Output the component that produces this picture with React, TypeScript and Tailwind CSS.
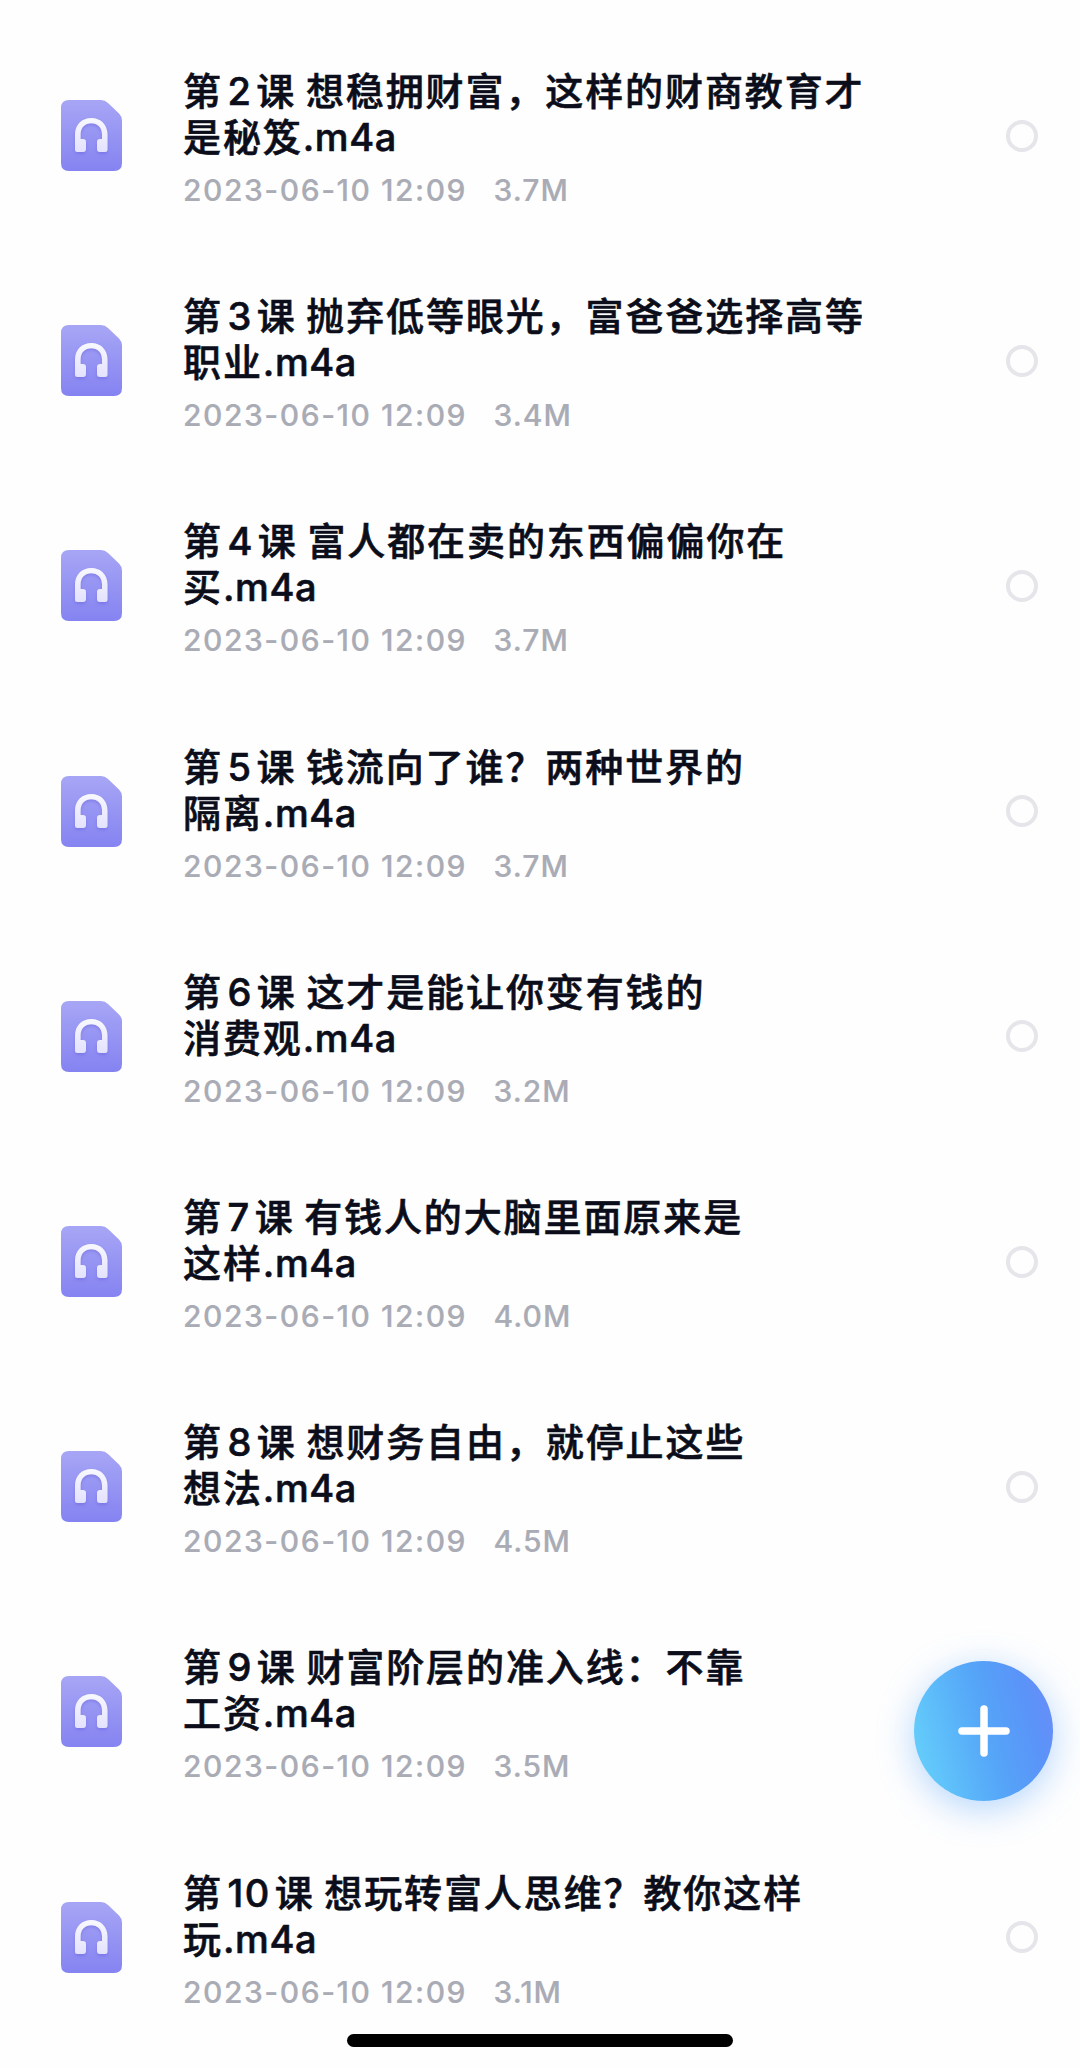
import React, { useState } from 'react';

const FILES = [
  { no: '2', title: '想稳拥财富,这样的财商教育才', rest: '是秘笈', size: '3.7M' },
  { no: '3', title: '抛弃低等眼光,富爸爸选择高等', rest: '职业', size: '3.4M' },
  { no: '4', title: '富人都在卖的东西偏偏你在', rest: '买', size: '3.7M' },
  { no: '5', title: '钱流向了谁?两种世界的', rest: '隔离', size: '3.7M' },
  { no: '6', title: '这才是能让你变有钱的', rest: '消费观', size: '3.2M' },
  { no: '7', title: '有钱人的大脑里面原来是', rest: '这样', size: '4.0M' },
  { no: '8', title: '想财务自由,就停止这些', rest: '想法', size: '4.5M' },
  { no: '9', title: '财富阶层的准入线:不靠', rest: '工资', size: '3.5M' },
  { no: '10', title: '想玩转富人思维?教你这样', rest: '玩', size: '3.1M' },
].map(f => ({
  ...f,
  // full-width punctuation
  title: f.title.replace(',', '\uff0c').replace('?', '\uff1f').replace(':', '\uff1a'),
}));

function AudioFileIcon() {
  return (
    <svg width="61" height="71" viewBox="0 0 61 71" className="shrink-0">
      <defs>
        <linearGradient id="file" x1="0" y1="0" x2="0" y2="1">
          <stop offset="0" stopColor="#a7a6f5" />
          <stop offset="1" stopColor="#8583f1" />
        </linearGradient>
        <linearGradient id="phones" x1="0" y1="0" x2="0" y2="1">
          <stop offset="0" stopColor="#f8f8ff" />
          <stop offset="1" stopColor="#e3e2fd" />
        </linearGradient>
        <filter id="soft" x="-30%" y="-30%" width="160%" height="160%">
          <feDropShadow dx="0" dy="2" stdDeviation="1.5" floodColor="#5f59d8" floodOpacity="0.4" />
        </filter>
      </defs>
      <path
        d="M8 0H40Q44 0 47 3L58 13.500Q61 16.500 61 20.500V63Q61 71 53 71H8Q0 71 0 63V8Q0 0 8 0Z"
        fill="url(#file)"
      />
      <path
        d="M14 34.500C14 24.500 21 18 30.300 18S46.500 24.500 46.500 34.500V49.500Q46.500 52 44 52H39Q36 52 36 49V42Q36 39 39 39H41V34.500C41 27.500 36.500 23.300 30.300 23.300S19.600 27.500 19.600 34.500V39H22Q25 39 25 42V49Q25 52 22 52H16.500Q14 52 14 49.500Z"
        fill="url(#phones)"
        filter="url(#soft)"
      />
    </svg>
  );
}

export default function App() {
  const [selected, setSelected] = useState<string[]>([]);

  const toggle = (no: string) =>
    setSelected(s => (s.includes(no) ? s.filter(n => n !== no) : [...s, no]));

  return (
    <div className="relative h-[2068px] w-[1080px] overflow-hidden bg-[#fefefe] pt-[23px] font-[Inter,'Noto_Sans_CJK_SC',sans-serif]">
      {FILES.map(f => (
        <div key={f.no} className="flex h-[225.2px] items-center pr-[42px] pl-[61px]">
          <AudioFileIcon />
          <div className="ml-[61px] flex-1 pt-[5px] whitespace-nowrap">
            <h2 className="text-[38px] leading-[46px] font-medium tracking-[1.9px] text-[#0b0e1a] [-webkit-text-stroke:0.6px_#0b0e1a]">
              <span className="block">
                第<span className="mr-[4px] ml-[4.5px] tracking-[1.5px]">{f.no}</span>课
                <span className="tracking-[-0.5px]"> </span>
                {f.title}
              </span>
              <span className="block">
                {f.rest}
                <span className="tracking-[0.6px]">.m4a</span>
              </span>
            </h2>
            <p className="mt-[12px] flex gap-[26.5px] text-[30px] leading-[36px] font-medium tracking-[1.55px] text-[#a9abb5] [-webkit-text-stroke:0.2px_#a9abb5]">
              <span>2023-06-10 12:09</span>
              <span className="tracking-[1px]">{f.size}</span>
            </p>
          </div>
          <button
            onClick={() => toggle(f.no)}
            className={`h-8 w-8 shrink-0 rounded-full border-4 ${selected.includes(f.no) ? 'border-[#5b8ff9] bg-[#5b8ff9]' : 'border-[#e5e5ea]'}`}
          />
        </div>
      ))}

      {/* Add button */}
      <button className="absolute top-[1661px] left-[914px] flex h-[140px] w-[139px] items-center justify-center rounded-full bg-[linear-gradient(75deg,#65d0fb_5%,#55a5f8_52%,#5a94f8_78%,#6b8cf8_98%)] shadow-[0_8px_36px_rgba(90,165,250,0.45)]">
        <svg width="52" height="52" viewBox="0 0 52 52" stroke="#fff" strokeWidth="7.500" strokeLinecap="round">
          <path d="M26 4V48M4 26H48" />
        </svg>
      </button>

      {/* Home indicator */}
      <div className="absolute top-[2034px] left-[347px] h-[13px] w-[386px] rounded-full bg-black" />
    </div>
  );
}
